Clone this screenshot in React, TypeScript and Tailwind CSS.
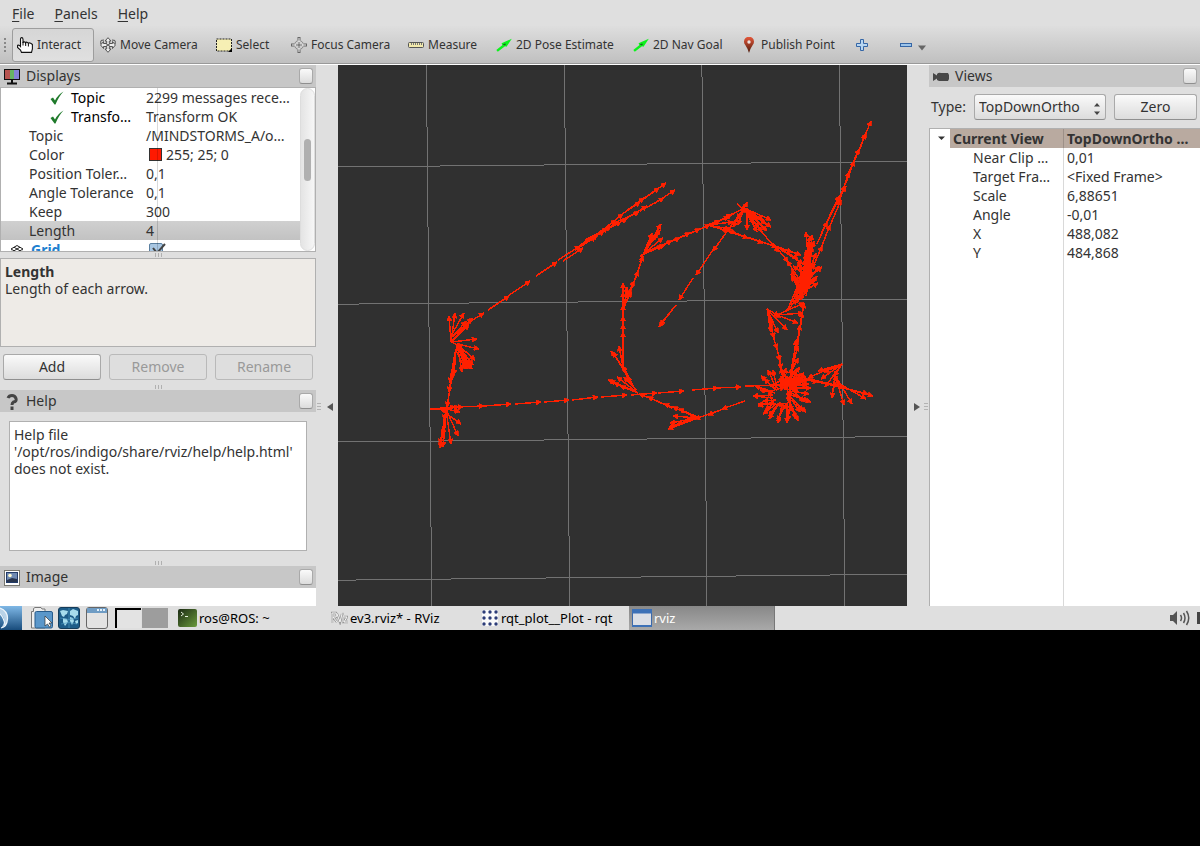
import type { ReactNode } from "react";

type Arrow = [number, number, number, number];

/* Pose arrows: tail x, tail y, head x, head y */
const arrows: Arrow[] = [
  // lower straight run
  [430, 409, 455, 407], [430, 409, 463, 407], [455, 407, 484, 406], [484, 406, 511, 404], [515, 404, 541, 402],
  [544, 402, 569, 400], [572, 400, 598, 397], [601, 397, 627, 395], [631, 395, 657, 393], [658, 393, 684, 391],
  [692, 390, 718, 388], [716, 388, 741, 387], [745, 386, 785, 385],
  // upper diagonal run
  [463, 326, 484, 313], [488, 310, 509, 296], [508, 296, 530, 281], [536, 276, 557, 262], [558, 260, 580, 246],
  [563, 261, 583, 248], [575, 250, 596, 237], [578, 248, 604, 231], [580, 245, 598, 235], [590, 240, 616, 220],
  [583, 243, 608, 228], [600, 232, 623, 214], [598, 234, 621, 222], [600, 231, 627, 219], [612, 224, 639, 212],
  [618, 217, 640, 202], [625, 212, 644, 198], [622, 221, 647, 206], [638, 203, 659, 188], [640, 201, 666, 183],
  [640, 211, 664, 198], [655, 203, 675, 190], [585, 240, 611, 227],
  // left cluster
  [451, 342, 449, 316], [451, 342, 455, 313], [451, 336, 464, 313], [451, 342, 472, 318], [451, 342, 469, 325],
  [453, 337, 466, 321], [453, 335, 470, 322], [451, 342, 477, 339], [457, 344, 479, 349], [457, 344, 475, 360], [457, 344, 472, 369],
  [457, 344, 467, 369], [457, 344, 462, 372], [457, 344, 470, 365], [457, 344, 465, 366], [457, 344, 473, 365],
  [456, 350, 465, 369], [458, 348, 470, 369], [451, 342, 462, 347], [457, 344, 452, 379], [455, 352, 450, 383], [454, 358, 449, 392],
  [453, 370, 447, 407], [450, 390, 444, 420], [456, 350, 454, 375],
  [446, 409, 460, 412], [440, 409, 461, 424], [446, 409, 458, 436], [446, 409, 451, 444], [447, 405, 443, 447],
  [445, 420, 440, 448], [447, 409, 443, 435], [430, 409, 448, 410], [438, 409, 459, 407], [446, 410, 440, 444],
  // left side of the loop
  [638, 393, 608, 380], [638, 393, 614, 383], [638, 393, 617, 377], [636, 390, 624, 377], [635, 391, 610, 381],
  [632, 386, 628, 376], [638, 393, 620, 386], [634, 388, 623, 366], [628, 378, 613, 352], [625, 370, 611, 351], [624, 372, 619, 346],
  [623, 366, 623, 332], [623, 350, 623, 324], [623, 340, 623, 316], [623, 332, 623, 305], [623, 318, 623, 292],
  [623, 310, 623, 283], [624, 308, 627, 287], [624, 306, 631, 292], [624, 308, 631, 289], [625, 300, 634, 281],
  [629, 295, 638, 271], [635, 280, 643, 256], [640, 262, 652, 233], [644, 253, 661, 224], [644, 253, 660, 230],
  [644, 253, 663, 238], [644, 253, 656, 235], [645, 250, 653, 235], [647, 247, 658, 233],
  [644, 253, 665, 245], [640, 256, 662, 246], [648, 251, 672, 241], [656, 248, 680, 238], [665, 244, 690, 233],
  [675, 240, 700, 229], [683, 236, 710, 225],
  // top cluster
  [707, 225, 720, 221], [707, 225, 729, 217], [707, 225, 733, 222], [712, 225, 732, 214], [744, 208, 771, 220],
  [744, 208, 771, 227], [744, 208, 767, 231], [744, 208, 762, 232], [744, 208, 757, 232], [747, 208, 747, 230],
  [744, 208, 738, 225], [744, 208, 733, 227], [744, 208, 727, 232], [740, 219, 747, 202], [737, 204, 748, 213],
  [735, 223, 745, 205], [744, 208, 724, 219], [744, 208, 754, 224], [744, 208, 759, 228], [744, 208, 763, 220],
  [744, 208, 737, 219], [744, 208, 766, 224], [744, 208, 757, 218], [733, 223, 713, 251], [715, 247, 696, 275], [693, 278, 679, 300],
  [676, 305, 659, 327], [676, 305, 660, 325], [707, 225, 730, 229], [707, 225, 736, 233], [710, 226, 729, 231],
  [720, 229, 748, 238], [735, 233, 763, 243], [750, 238, 777, 247], [765, 243, 792, 252], [775, 246, 801, 255],
  [760, 230, 779, 252], [773, 243, 788, 262], [777, 247, 798, 259], [780, 249, 803, 264],
  // long line to the upper right
  [817, 244, 827, 222], [822, 232, 839, 196], [827, 222, 845, 186], [813, 267, 822, 246], [818, 256, 830, 225],
  [826, 235, 841, 200], [838, 205, 849, 172], [838, 200, 846, 186], [846, 183, 854, 161], [849, 172, 859, 149],
  [854, 162, 866, 133], [859, 150, 871, 121], [860, 149, 865, 134],
  // upper right cluster
  [809, 268, 806, 232], [808, 272, 812, 235], [807, 275, 814, 241], [806, 280, 812, 246], [808, 278, 811, 252],
  [804, 285, 816, 253], [802, 283, 822, 267], [801, 290, 819, 266], [799, 294, 818, 283], [801, 285, 816, 280],
  [803, 298, 792, 269], [800, 290, 791, 274], [800, 280, 787, 261], [805, 275, 793, 266], [805, 282, 798, 262],
  [796, 299, 808, 266], [797, 303, 812, 272], [798, 302, 806, 258], [800, 299, 810, 259], [800, 294, 806, 254],
  [803, 290, 809, 249], [798, 280, 797, 300], [806, 270, 801, 300], [810, 278, 804, 295], [808, 270, 794, 282],
  [810, 272, 797, 288], [811, 265, 800, 276], [796, 279, 814, 274], [798, 282, 815, 264], [806, 268, 796, 296],
  [788, 309, 804, 270], [787, 310, 800, 288], [786, 312, 797, 299], [809, 280, 806, 250], [809, 288, 809, 240],
  [803, 292, 801, 265], [805, 294, 805, 260], [806, 296, 813, 262], [806, 290, 817, 276], [803, 280, 812, 280],
  [804, 278, 808, 289], [799, 279, 806, 284], [809, 272, 802, 272], [808, 260, 810, 236], [798, 289, 792, 276],
  // small fan below it
  [777, 315, 804, 303], [777, 315, 803, 313], [777, 315, 798, 323], [767, 309, 787, 330], [767, 309, 778, 333],
  [767, 309, 771, 332], [768, 314, 774, 338], [767, 309, 779, 316], [767, 309, 772, 326], [773, 336, 777, 349], [776, 345, 780, 361], [774, 314, 781, 317],
  // link between clusters
  [792, 370, 798, 358], [792, 368, 798, 346], [793, 364, 796, 340], [796, 350, 800, 325], [800, 330, 804, 303],
  [791, 370, 797, 339], [798, 342, 802, 312], [779, 355, 781, 369],
  // lower right ring
  [776, 388, 768, 370], [777, 388, 773, 370], [775, 389, 761, 376], [784, 386, 781, 368], [788, 386, 792, 368],
  [790, 384, 799, 367], [773, 392, 755, 386], [773, 395, 753, 396], [773, 398, 753, 396], [774, 402, 758, 406],
  [775, 404, 758, 404], [776, 404, 763, 414], [778, 405, 769, 419], [776, 406, 769, 416], [782, 405, 778, 423], [786, 404, 777, 421],
  [787, 403, 787, 423], [790, 402, 788, 421], [790, 402, 798, 421], [788, 400, 796, 418], [791, 398, 806, 412],
  [791, 397, 803, 411], [791, 395, 811, 402], [791, 393, 808, 401], [790, 391, 809, 394], [790, 388, 811, 388],
  [790, 387, 807, 384], [788, 384, 809, 379], [786, 386, 804, 373], [780, 386, 786, 368], [777, 390, 764, 379],
  [790, 387, 803, 377], [786, 388, 795, 370], [782, 386, 801, 383], [780, 384, 800, 378], [788, 390, 781, 376],
  [795, 392, 786, 377], [790, 397, 790, 377], [793, 390, 797, 375], [785, 385, 809, 384], [783, 381, 791, 386],
  [787, 376, 785, 390], [788, 380, 798, 392], [781, 376, 787, 386], [770, 386, 784, 379], [803, 378, 786, 384],
  [806, 380, 789, 388], [792, 372, 790, 390], [797, 371, 791, 384], [785, 374, 789, 398], [791, 383, 780, 380],
  [792, 389, 804, 402], [790, 390, 791, 411], [786, 404, 783, 410], [775, 393, 760, 390], [776, 400, 763, 401],
  [784, 375, 797, 388], [787, 372, 806, 377], [787, 378, 806, 381], [800, 369, 785, 381],
  [771, 391, 785, 387], [787, 388, 789, 402], [788, 403, 776, 405], [772, 402, 769, 391], [773, 404, 765, 410], [792, 400, 800, 412],
  // right fan
  [842, 364, 818, 371], [842, 364, 821, 379], [841, 365, 825, 387], [835, 366, 808, 378], [838, 366, 824, 372],
  [835, 375, 832, 398], [835, 375, 844, 405], [835, 375, 852, 404], [838, 383, 866, 399], [843, 388, 873, 396],
  [840, 387, 868, 394], [818, 382, 844, 388], [809, 379, 839, 386], [806, 380, 818, 382], [833, 385, 837, 376], [842, 364, 834, 376],
  // bottom fan
  [745, 401, 722, 409], [728, 407, 708, 415], [715, 412, 695, 419], [698, 418, 673, 416], [698, 418, 670, 423],
  [698, 418, 668, 429], [700, 418, 679, 409], [695, 417, 673, 407], [690, 414, 664, 404], [672, 408, 648, 397],
  [660, 402, 639, 394], [697, 418, 677, 424], [698, 418, 687, 419], [698, 418, 669, 427],
];

function arrowPath([x1, y1, x2, y2]: Arrow) {
  const length = Math.hypot(x2 - x1, y2 - y1) || 1;
  const ux = (x2 - x1) / length;
  const uy = (y2 - y1) / length;
  const bx = x2 - ux * 4.8;
  const by = y2 - uy * 4.8;
  return `M${bx - uy * 2.5} ${by + ux * 2.5}L${x2} ${y2}L${bx + uy * 2.5} ${by - ux * 2.5}Z`;
}

function Scene() {
  return (
    <svg className="absolute inset-0 h-full w-full" viewBox="338 65 569 541" preserveAspectRatio="xMidYMid slice" role="img" aria-label="Odometry view" shapeRendering="crispEdges">
      <g stroke="#727272" strokeWidth="1">
        <path d="M426.4 65L431.8 606M564.4 65L569.7 606M701.9 65L707 606M839.4 65L844.9 606" />
        <path d="M338 167L907 161.5M338 304.2L907 299M338 442L907 436.5M338 580.2L907 574.2" />
      </g>
      <g stroke="#ff2000" strokeWidth="1.45" fill="#ff2000">
        {arrows.map(([x1, y1, x2, y2], i) => (
          <line key={i} x1={x1} y1={y1} x2={x2} y2={y2} />
        ))}
        {arrows.map((a, i) => (
          <path key={i} d={arrowPath(a)} strokeWidth="0.8" />
        ))}
      </g>
    </svg>
  );
}

/* ---------- icons ---------- */

const HandIcon = () => (
  <svg width="16" height="16" viewBox="0 0 16 16">
    <path d="M3.5 9.5V2.2Q3.5.6 4.7.6T6 2.2V6Q6.2 4.8 7.3 4.9T8.6 6Q9 5 10 5.2T11.3 6.4Q12 5.6 13 6T15.4 7.5V12L14.5 15.4H4.5L3.5 13 .6 10.5V8.3Q2 7.6 3.5 9.5Z" fill="#fff" stroke="#111" strokeWidth="1.1" />
    <path d="M6 5v3.5M8.7 6v3M11.4 6.5v3" stroke="#111" />
  </svg>
);
const MoveIcon = () => (
  <svg width="16" height="16" viewBox="0 0 16 16" fill="#eee" stroke="#555" strokeWidth="1">
    <path d="M8 .7L11 4H9.3V6.5H12.5V4.5L15.4 8 12.5 11.5V9.5H9.3V12H11L8 15.3 5 12H6.7V9.5H3.5V11.5L.6 8 3.5 4.5V6.5H6.7V4H5Z" />
    <path d="M.8 3.5L4 3M15.2 3.5L12 3M.8 4v3M15.2 4v3M5 6l6 4M5 10l6-4" fill="none" />
  </svg>
);
const SelectIcon = () => (
  <svg width="16" height="16" viewBox="0 0 16 16">
    <rect x=".5" y="2" width="15" height="12" fill="#f6efb4" stroke="#222" strokeDasharray="2 1" />
    <path d="M16 11v4h-4z" fill="#000" />
  </svg>
);
const FocusIcon = () => (
  <svg width="16" height="16" viewBox="0 0 16 16" fill="none" stroke="#666">
    <circle cx="8" cy="8" r="4.5" stroke="#888" />
    <path d="M8 3V0M8 13v3M3 8H0M13 8h3" strokeWidth="3" />
    <path d="M8 7V1M8 9v6M7 8H1M9 8h6" strokeWidth="1" stroke="#eee" />
    <path d="M8 5v6M5 8h6" />
  </svg>
);
const RulerIcon = () => (
  <svg width="16" height="16" viewBox="0 0 16 16">
    <rect x=".5" y="5.5" width="15" height="5" rx="1" fill="#f2e9ac" stroke="#555" />
    <path d="M3.5 6v2M5.5 6v2M7.5 6v2M9.5 6v2M11.5 6v2M13.5 6v2" stroke="#777" />
  </svg>
);
const GreenArrowIcon = () => (
  <svg width="16" height="16" viewBox="0 0 16 16">
    <path d="M.3 13L6.500 8 5.500 6.200 15.800 1.800 10.500 9.800 9 9.300 1.800 14.700Z" fill="#0df21d" />
    <path d="M6.500 7.500l2.500 1 1-1.500L9 6.500z" fill="#12701a" />
  </svg>
);
const PinIcon = () => (
  <svg width="16" height="16" viewBox="0 0 16 16">
    <defs><linearGradient id="pin" x2="0" y2="1"><stop stopColor="#e8583b" /><stop offset="1" stopColor="#4a1a0a" /></linearGradient></defs>
    <path d="M8 16Q7 12 4.300 8A5 5 0 1 1 11.700 8Q9 12 8 16Z" fill="url(#pin)" />
    <circle cx="8" cy="5" r="1.700" fill="#ece3e0" />
  </svg>
);
const PlusIcon = () => (
  <svg width="16" height="16" viewBox="0 0 16 16"><path d="M6.500 2.500h3v4h4v3h-4v4h-3v-4h-4v-3h4Z" fill="#b7d6f2" stroke="#3566a6" /></svg>
);
const MinusIcon = () => (
  <svg width="16" height="16" viewBox="0 0 16 16"><rect x="2.500" y="6.500" width="11" height="3" fill="#9cc4ea" stroke="#3566a6" /></svg>
);
const MonitorIcon = () => (
  <svg width="16" height="16" viewBox="0 0 16 16">
    <path d="M1 1h5v9H1z" fill="#b85450" /><path d="M6 1h4v9H6z" fill="#68b565" /><path d="M10 1h5v9h-5z" fill="#8583d8" />
    <rect x=".5" y=".5" width="15" height="10" fill="none" stroke="#111" />
    <path d="M8 11v3M3 14.500h10" stroke="#111" strokeWidth="2" />
  </svg>
);
const CameraIcon = () => (
  <svg width="16" height="16" viewBox="0 0 16 16"><path d="M0 4l4 2.500V5q2-2 4-1h7l1 2v4l-1 2H6L4 11V9.500L0 12Z" fill="#474747" /></svg>
);
const QuestionIcon = () => (
  <svg width="16" height="16" viewBox="0 0 16 16" fill="none" stroke="#444" strokeWidth="3"><path d="M4 4Q5 1.500 8 1.500T12 4.500T9.500 8Q8 9 8 11M8 12.500V16" /></svg>
);
const PictureIcon = () => (
  <svg width="16" height="16" viewBox="0 0 16 16">
    <rect x=".5" y=".5" width="15" height="15" fill="#fff" stroke="#77776f" />
    <rect x="2.500" y="2.500" width="11" height="10" fill="#6f8ab2" stroke="#233c69" />
    <path d="M3 12V10l5-2 5 1v3z" fill="#29354d" /><circle cx="6" cy="5.500" r="1.800" fill="#fffbd0" />
  </svg>
);
const CheckIcon = () => (
  <svg width="14" height="14" viewBox="0 0 14 14"><path d="M.5 8L3 6.500 5 9.500Q8 3.500 13.500 .5Q9 5 5.500 13.500H4.500Z" fill="#1f7a2b" /></svg>
);
const GridIcon = () => (
  <svg width="14" height="12" viewBox="0 0 14 12" fill="#fff" stroke="#222"><path d="M7 1.500l6 3.500-6 3.500L1 5ZM4 3.200l6 3.600M10 3.200L4 6.800M1 7l6 4 6-4" /></svg>
);

/* ---------- shared pieces ---------- */

const raised = "rounded-[3px] border border-[#a9a9a9] border-b-[#8f8f8f] bg-linear-to-b from-[#fafafa] to-[#dcdcdc]";

function PanelHeader({ icon, title }: { icon: ReactNode; title: string }) {
  return (
    <header className="flex h-[22px] shrink-0 items-center gap-1.5 bg-[#c7c7c7] pr-[3px] pl-1">
      <span className="pt-px">{icon}</span>
      <h2 className="flex-1 pb-0.5">{title}</h2>
      <button aria-label={`Close ${title}`} className={`h-4 w-3.5 ${raised}`} />
    </header>
  );
}

function Grip({ vertical = false }: { vertical?: boolean }) {
  return (
    <div className={vertical ? "flex flex-col gap-0.5" : "flex justify-center gap-0.5"}>
      {[0, 1, 2].map((i) => (
        <span key={i} className={vertical ? "h-px w-1 bg-[#b3b3b3]" : "h-1 w-px bg-[#b0b0b0]"} />
      ))}
    </div>
  );
}

const tools = [
  { label: "Move Camera", icon: <MoveIcon />, width: "w-[116px]" },
  { label: "Select", icon: <SelectIcon />, width: "w-[75px]" },
  { label: "Focus Camera", icon: <FocusIcon />, width: "w-[117px]" },
  { label: "Measure", icon: <RulerIcon />, width: "w-[88px]" },
  { label: "2D Pose Estimate", icon: <GreenArrowIcon />, width: "w-[137px]" },
  { label: "2D Nav Goal", icon: <GreenArrowIcon />, width: "w-[108px]" },
  { label: "Publish Point", icon: <PinIcon />, width: "w-[114px]" },
];

function Toolbar() {
  return (
    <div role="toolbar" className="flex h-[39px] items-center overflow-hidden border-b border-white bg-linear-to-b from-[#dedede] to-[#bfbfbf] pb-px text-xs shadow-[inset_0_-1px_0_#999]">
      <svg className="mr-1 ml-1 shrink-0" width="4" height="14" viewBox="0 0 4 14" fill="#888">
        <path d="M0 0h2v2H0zM0 4h2v2H0zM0 8h2v2H0zM0 12h2v2H0z" />
      </svg>
      <button className="mr-px flex h-[34px] w-[82px] shrink-0 items-center gap-1 rounded-[3px] border border-[#9d9d9d] bg-linear-to-b from-[#d6d6d6] to-[#e0e0e0] pl-1">
        <HandIcon />
        Interact
      </button>
      {tools.map((tool) => (
        <button key={tool.label} className={`flex shrink-0 items-center gap-1 pl-[5px] whitespace-nowrap ${tool.width}`}>
          {tool.icon}
          {tool.label}
        </button>
      ))}
      <button aria-label="Add tool" className="mr-7 ml-1"><PlusIcon /></button>
      <button aria-label="Remove tool" className="flex items-center gap-1">
        <MinusIcon />
        <svg className="mt-1.5" width="8" height="6" viewBox="0 0 8 6"><path d="M0 .5h8L4 5.500z" fill="#666" /></svg>
      </button>
    </div>
  );
}

const properties = [
  { name: "Topic", value: "2299 messages rece…", status: true },
  { name: "Transfo…", value: "Transform OK", status: true },
  { name: "Topic", value: "/MINDSTORMS_A/o…" },
  { name: "Color", value: "255; 25; 0", swatch: true },
  { name: "Position Toler…", value: "0,1" },
  { name: "Angle Tolerance", value: "0,1" },
  { name: "Keep", value: "300" },
  { name: "Length", value: "4", selected: true },
];

function DisplaysPanel() {
  return (
    <section>
      <PanelHeader icon={<MonitorIcon />} title="Displays" />
      <div className="relative flex h-[165px] overflow-hidden border border-[#b0b0b0] bg-white">
        <div className="flex-1">
          <table className="w-full table-fixed border-collapse whitespace-nowrap">
            <colgroup><col className="w-[145px]" /><col /></colgroup>
            <tbody>
              {properties.map((p, i) => (
                <tr key={i} className={p.selected ? "h-[19px] bg-linear-to-b from-[#d0d0d0] to-[#c2c2c2]" : "h-[19px]"}>
                  <td className={p.status ? "p-0 pl-[49px] text-black" : "p-0 pl-7"}>
                    <span className="flex items-center gap-[7px]">{p.status && <CheckIcon />}{p.name}</span>
                  </td>
                  <td className="p-0">
                    <span className="flex items-center gap-1">
                      {p.swatch && <span className="ml-[3px] size-[13px] border border-[#333] bg-[#ff1900]" />}
                      {p.value}
                    </span>
                  </td>
                </tr>
              ))}
              <tr className="h-[19px]">
                <td className="p-0 pl-[9px]">
                  <span className="flex items-center gap-[7px] font-bold text-[#2080d0]"><GridIcon />Grid</span>
                </td>
                <td className="p-0">
                  <label className="relative ml-[3px] block size-3.5">
                    <input type="checkbox" defaultChecked aria-label="Grid enabled" className="block size-3.5 appearance-none rounded-xs border border-[#5a7fa0] bg-[#a8c6e2]" />
                    <svg className="pointer-events-none absolute top-0 left-0.5" width="15" height="13" viewBox="0 0 15 13"><path d="M2 5l4 5L14 1" fill="none" stroke="#444" strokeWidth="2" /></svg>
                  </label>
                </td>
              </tr>
            </tbody>
          </table>
        </div>
        <div className="absolute top-0 left-[156px] h-full w-px bg-black/15" />
        <div className="w-[15px] rounded-full border border-[#ddd] bg-linear-to-r from-[#e4e4e4] to-[#f6f6f6] px-[3px] pt-[50px]">
          <div className="h-[42px] rounded-full bg-[#b0b0b0]" />
        </div>
      </div>
    </section>
  );
}

const viewProperties = [
  ["Near Clip …", "0,01"],
  ["Target Fra…", "<Fixed Frame>"],
  ["Scale", "6,88651"],
  ["Angle", "-0,01"],
  ["X", "488,082"],
  ["Y", "484,868"],
];

function ViewsPanel() {
  return (
    <aside className="flex w-[271px] shrink-0 flex-col">
      <PanelHeader icon={<CameraIcon />} title="Views" />
      <div className="flex items-center px-[3px] pt-[7px] pb-2 pl-0.5">
        <label htmlFor="view-type" className="w-[43px] pb-px">Type:</label>
        <div className="relative mr-2 flex-1">
          <select id="view-type" className={`h-[26px] w-full appearance-none pb-0.5 pl-1 ${raised}`}>
            <option>TopDownOrtho</option>
          </select>
          <svg className="pointer-events-none absolute top-[9px] right-1.5" width="6" height="12" viewBox="0 0 6 12" fill="#444"><path d="M0 3.500h6L3 0zM0 8.500h6L3 12z" /></svg>
        </div>
        <button className={`h-[26px] w-[83px] pb-0.5 ${raised}`}>Zero</button>
      </div>
      <div className="relative flex-1 border-t border-l border-[#b0b0b0] bg-white">
        <table className="w-full table-fixed border-collapse text-left whitespace-nowrap">
          <colgroup><col className="w-5" /><col className="w-[113px]" /><col /></colgroup>
          <thead>
            <tr className="h-[19px]">
              <td className="p-0">
                <svg className="ml-2" width="7" height="5" viewBox="0 0 7 5"><path d="M0 .5h7L3.500 4z" fill="#333" /></svg>
              </td>
              <th className="bg-[#b9aaa0] p-0 pl-[3px]">Current View</th>
              <th className="bg-[#b9aaa0] p-0 pl-1">TopDownOrtho …</th>
            </tr>
          </thead>
          <tbody>
            {viewProperties.map(([name, value]) => (
              <tr key={name} className="h-[19px]">
                <td className="p-0" />
                <td className="p-0 pl-[23px]">{name}</td>
                <td className="p-0 pl-1">{value}</td>
              </tr>
            ))}
          </tbody>
        </table>
        <div className="absolute top-0 left-[133px] h-full w-px bg-black/15" />
      </div>
    </aside>
  );
}

function Taskbar() {
  return (
    <footer className="flex h-6 items-center overflow-hidden bg-[#dfdfdf] text-[13px] whitespace-nowrap text-black">
      <button aria-label="Menu" className="mr-[9px] h-full shrink-0">
        <svg width="22" height="24" viewBox="0 0 22 24">
          <defs><linearGradient id="menu" x2="0" y2="1"><stop stopColor="#7fb8e6" /><stop offset="1" stopColor="#184c7c" /></linearGradient></defs>
          <path d="M0 0h22v24H0z" fill="url(#menu)" />
          <path d="M0 2Q8 5 7.500 13T1 22Q5 17 4 13T0 8Z" fill="#b9d3e8" />
          <path d="M0 2Q8 5 7.500 13T1 22M0 8Q4 12 5 19" fill="none" stroke="#eef6fc" strokeWidth="1.200" />
        </svg>
      </button>
      <button aria-label="File manager" className="mr-[5px] shrink-0">
        <svg width="22" height="22" viewBox="0 0 22 22">
          <path d="M.5 4.500h2v-3l1.500-1h6l1 1.500h3v19H.5z" fill="#eee" stroke="#777" />
          <rect x="4" y="4.500" width="17.500" height="16.500" rx="1.500" fill="#5b97ca" stroke="#285c8c" />
          <path d="M14 9v10l2.500-2 2 3 1.500-1-2-3h3z" fill="#fff" stroke="#333" strokeWidth=".7" />
        </svg>
      </button>
      <button aria-label="Web browser" className="mr-1.5 shrink-0">
        <svg width="22" height="22" viewBox="0 0 22 22">
          <rect x=".5" y=".5" width="21" height="21" rx="2.500" fill="#1d5c88" stroke="#153c5a" />
          <path d="M2 4l3-1 5 1-1 3-2 1-1 2-2-1zM12 4l3-2 5 2v4l-2 1-1 3-2-3-3-1zM5 11l4 1 1 3-3 4-2-4zM12 10l3 1 1 3-2 4-2-4zM17 14l3-1v3l-2 1z" fill="#a7dcec" />
          <path d="M2 11Q11 14 20 11M11 1v20M3 17q8-3 16 0" fill="none" stroke="#4c96bd" strokeWidth=".7" />
        </svg>
      </button>
      <button aria-label="Show desktop" className="mr-[7px] shrink-0">
        <svg width="22" height="22" viewBox="0 0 22 22">
          <rect x=".5" y=".5" width="21" height="21" rx="2.500" fill="#e3e3e3" stroke="#666" />
          <path d="M1 1h20v5H1z" fill="#6f9cc4" /><path d="M11 2h2v2h-2zM14 2h2v2h-2zM17 2h2v2h-2z" fill="#e3f0fa" />
        </svg>
      </button>
      <button aria-label="Desktop 1" className="mr-px h-5 w-[26px] shrink-0 border-t-2 border-l-2 border-black bg-[#e3e3e3]" />
      <button aria-label="Desktop 2" className="mr-2.5 h-5 w-[26px] shrink-0 bg-[#9d9d9d]" />
      <button className="flex w-[153px] shrink-0 items-center gap-0.5">
        <svg width="19" height="18" viewBox="0 0 19 18">
          <defs><linearGradient id="term" x2="1" y2="1"><stop stopColor="#1b2a14" /><stop offset="1" stopColor="#6b9b3c" /></linearGradient></defs>
          <rect width="19" height="18" rx="2" fill="url(#term)" />
          <path d="M3 3l2.500 2L3 7M7 7.500h3" fill="none" stroke="#e7f1df" />
        </svg>
        ros@ROS: ~
      </button>
      <button className="flex w-[151px] shrink-0 items-center gap-0.5">
        <svg width="17" height="14" viewBox="0 0 17 14" fill="none" stroke="#999">
          <path d="M1 12V2h4l1 2-1 2H2l4 5M6 3l3 8 2-8M12 6v5M11.500 3h1M13 6h3l-3 5h4" strokeWidth="2.400" />
          <path d="M1 12V2h4l1 2-1 2H2l4 5M6 3l3 8 2-8M12 6v5M13 6h3l-3 5h4" stroke="#f6f6f6" />
        </svg>
        ev3.rviz* - RViz
      </button>
      <button className="flex w-[147px] shrink-0 items-center gap-[3px]">
        <svg width="16" height="16" viewBox="0 0 16 16">
          <rect width="16" height="16" rx="2" fill="#fafafa" />
          <g fill="#2c3c78">
            {[2, 8, 14].flatMap((x) => [2, 8, 14].map((y) => <circle key={`${x}-${y}`} cx={x} cy={y} r="1.700" />))}
          </g>
        </svg>
        rqt_plot__Plot - rqt
      </button>
      <button className="flex h-full w-[146px] shrink-0 items-center gap-0.5 border-r border-[#777] bg-linear-to-b from-[#888] to-[#a9a9a9] pl-[3px] text-white">
        <svg width="20" height="18" viewBox="0 0 20 18">
          <rect x=".5" y=".5" width="19" height="17" rx="1" fill="#dcdfe6" stroke="#3c69a9" /><path d="M0 0h20v4.500H0zM0 16h20v2H0z" fill="#3d71b7" />
        </svg>
        rviz
      </button>
      <svg className="mr-1.5 ml-auto shrink-0" width="21" height="18" viewBox="0 0 21 18" fill="none" stroke="#555" strokeWidth="1.500">
        <path d="M0 6h3l4-4v14l-4-4H0z" fill="#555" stroke="none" />
        <path d="M10.500 6q2 3 0 6M13.500 4q3 5 0 10M16.500 2q4.500 7 0 14" />
      </svg>
      <span className="h-3 w-[3px] shrink-0 bg-[#444]" />
    </footer>
  );
}

export default function App() {
  return (
    <div className="min-h-screen overflow-hidden bg-black">
      <div className="bg-[#dfdfdf] font-['Noto_Sans','Open_Sans',sans-serif] text-sm leading-[17px] text-[#333]">
        <nav className="flex h-[26px] items-center gap-5 pl-3">
          {["File", "Panels", "Help"].map((item) => (
            <button key={item}>
              <span className="underline underline-offset-2">{item[0]}</span>
              {item.slice(1)}
            </button>
          ))}
        </nav>
        <Toolbar />
        <main className="flex">
          <aside className="flex w-[316px] shrink-0 flex-col">
            <DisplaysPanel />
            <div className="pt-px pb-px"><Grip /></div>
            <section className="h-[89px] border border-[#b0b0b0] bg-[#eeebe7] p-1">
              <h3 className="font-bold">Length</h3>
              <p>Length of each arrow.</p>
            </section>
            <div className="grid grid-cols-3 gap-2 px-[3px] pt-[7px] pb-[5px]">
              <button className={`h-[26px] pb-0.5 ${raised}`}>Add</button>
              <button disabled className="h-[26px] rounded-[3px] border border-[#b9b9b9] bg-[#dedede] pb-0.5 text-[#999]">Remove</button>
              <button disabled className="h-[26px] rounded-[3px] border border-[#b9b9b9] bg-[#dedede] pb-0.5 text-[#999]">Rename</button>
            </div>
            <Grip />
            <section className="mt-px">
              <PanelHeader icon={<QuestionIcon />} title="Help" />
              <div className="mx-[9px] mt-[9px] mb-2.5 h-[130px] border border-[#b0b0b0] bg-white p-1">
                <p>Help file</p>
                <p className="whitespace-nowrap">&apos;/opt/ros/indigo/share/rviz/help/help.html&apos;</p>
                <p>does not exist.</p>
              </div>
            </section>
            <Grip />
            <section className="mt-px">
              <PanelHeader icon={<PictureIcon />} title="Image" />
              <div className="h-[18px] bg-white" />
            </section>
          </aside>
          <div className="flex w-[22px] shrink-0 items-center justify-between pt-[142px] pr-[5px] pl-px">
            <Grip vertical />
            <svg width="6" height="8" viewBox="0 0 6 8"><path d="M6 0v8L0 4z" fill="#555" /></svg>
          </div>
          <div className="relative min-w-0 flex-1 overflow-hidden bg-[#303030]">
            <Scene />
          </div>
          <div className="flex w-[22px] shrink-0 items-center justify-between pt-[142px] pr-px pl-[7px]">
            <svg width="6" height="8" viewBox="0 0 6 8"><path d="M0 0v8L6 4z" fill="#555" /></svg>
            <Grip vertical />
          </div>
          <ViewsPanel />
        </main>
        <Taskbar />
      </div>
    </div>
  );
}
